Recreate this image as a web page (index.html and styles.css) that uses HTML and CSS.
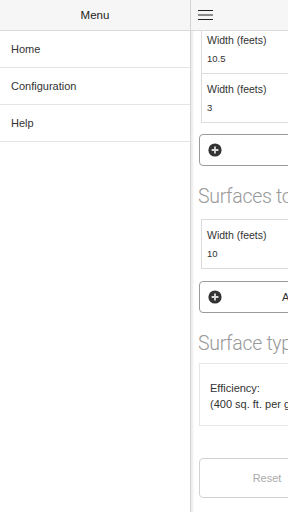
FILE: index.html
```html
<!DOCTYPE html>
<html>
<head>
<meta charset="utf-8">
<link rel="stylesheet" href="styles.css">
</head>
<body>
<div class="wrap">
  <nav class="panel">
    <div class="panel-head">Menu</div>
    <ul class="menu">
      <li>Home</li>
      <li>Configuration</li>
      <li>Help</li>
    </ul>
  </nav>
  <div class="page">
    <header class="page-head">
      <svg class="burger" width="15" height="11" viewBox="0 0 15 11"><path d="M0 0.5H15M0 5H15M0 9.5H15" stroke="#222" stroke-width="1.2"/></svg>
    </header>
    <div class="scroll">
      <div class="content">
        <div class="fields first">
          <div class="row"><div class="label">Width (feets)</div><div class="value">10.5</div></div>
          <div class="row"><div class="label">Width (feets)</div><div class="value">3</div></div>
        </div>
        <button class="btn btn-add gap11"><svg class="plus" width="14" height="14" viewBox="0 0 14 14"><circle cx="7" cy="7" r="6.6" fill="#333"/><path d="M7 3.6V10.4M3.6 7H10.4" stroke="#ddd" stroke-width="1.8"/></svg><span>Add a surface</span></button>
        <h2 class="title">Surfaces to exclude</h2>
        <div class="fields gap9">
          <div class="row"><div class="label">Width (feets)</div><div class="value">10</div></div>
        </div>
        <button class="btn btn-add gap12"><svg class="plus" width="14" height="14" viewBox="0 0 14 14"><circle cx="7" cy="7" r="6.6" fill="#333"/><path d="M7 3.6V10.4M3.6 7H10.4" stroke="#ddd" stroke-width="1.8"/></svg><span>Add excluded surface</span></button>
        <h2 class="title">Surface type</h2>
        <div class="info">
          <div>Efficiency:</div>
          <div>(400 sq. ft. per gallon)</div>
        </div>
        <div class="actions">
          <button class="btn btn-reset">Reset</button>
          <button class="btn btn-calc">Calculate</button>
        </div>
      </div>
    </div>
  </div>
</div>
</body>
</html>
```
FILE: styles.css
```css
html, body {
  margin: 0;
  padding: 0;
  width: 288px;
  height: 512px;
  overflow: hidden;
  background: #fff;
  font-family: "Liberation Sans", Arial, sans-serif;
  color: #333;
}
.wrap {
  display: flex;
  flex-direction: row;
  height: 512px;
}
.panel {
  width: 190px;
  flex-shrink: 0;
  border-right: 1px solid #d4d4d4;
  background: #fff;
}
.panel-head {
  height: 30px;
  line-height: 31px;
  border-bottom: 1px solid #dadada;
  background: #f6f6f6;
  text-align: center;
  font-size: 11.5px;
  color: #222;
}
.menu {
  list-style: none;
  margin: 0;
  padding: 0;
}
.menu li {
  height: 36px;
  line-height: 37px;
  padding-left: 11px;
  border-bottom: 1px solid #e4e4e4;
  font-size: 11px;
  color: #333;
}
.page {
  width: 288px;
  flex-shrink: 0;
  display: flex;
  flex-direction: column;
  box-shadow: inset 3px 0 2px -1px #ececec;
  background: #fff;
}
.page-head {
  height: 30px;
  border-bottom: 1px solid #dadada;
  background: #f6f6f6;
  display: flex;
  align-items: center;
  padding-left: 7px;
}
.burger {
  display: block;
  margin-top: 0;
}
.scroll {
  flex: 1;
  overflow: hidden;
}
.content {
  padding: 0 0 0 8px;
  width: 272px;
}
.fields {
  margin-left: 2px;
  border: 1px solid #dcdcdc;
  border-right: none;
}
.fields.first {
  margin-top: -7px;
}
.row {
  padding: 7px 5px 7px;
  height: 34px;
}
.row + .row {
  border-top: 1px solid #dcdcdc;
}
.label {
  font-size: 10.5px;
  line-height: 16px;
  color: #333;
}
.value {
  font-size: 9.5px;
  line-height: 14px;
  margin-top: 4px;
  color: #333;
}
.btn {
  display: flex;
  align-items: center;
  justify-content: center;
  position: relative;
  box-sizing: border-box;
  width: 272px;
  height: 32px;
  border: 1px solid #9a9a9a;
  border-radius: 4px;
  background: #fff;
  font-family: "Liberation Sans", Arial, sans-serif;
  font-size: 11px;
  color: #333;
  padding: 0;
  margin: 0;
}
.plus {
  position: absolute;
  left: 8px;
  top: 8px;
}
.gap11 { margin-top: 11px; }
.gap12 { margin-top: 12px; }
.gap9 { margin-top: 9px; }
.title {
  margin: 18px 0 0 -1px;
  font-family: Roboto, "Liberation Sans", sans-serif;
  font-weight: 300;
  font-size: 19.5px;
  letter-spacing: -0.3px;
  line-height: 26px;
  color: #999;
  white-space: nowrap;
}
.info {
  margin-top: 6px;
  border: 1px solid #e6e6e6;
  border-right: none;
  padding: 16px 10px 13px;
  font-size: 11px;
  line-height: 16px;
  color: #333;
  white-space: nowrap;
}
.actions {
  margin-top: 32px;
  display: grid;
  grid-template-columns: 136px 136px;
}
.actions .btn {
  width: 136px;
  height: 40px;
  border-color: #d2d2d2;
  color: #aaa;
}
```
